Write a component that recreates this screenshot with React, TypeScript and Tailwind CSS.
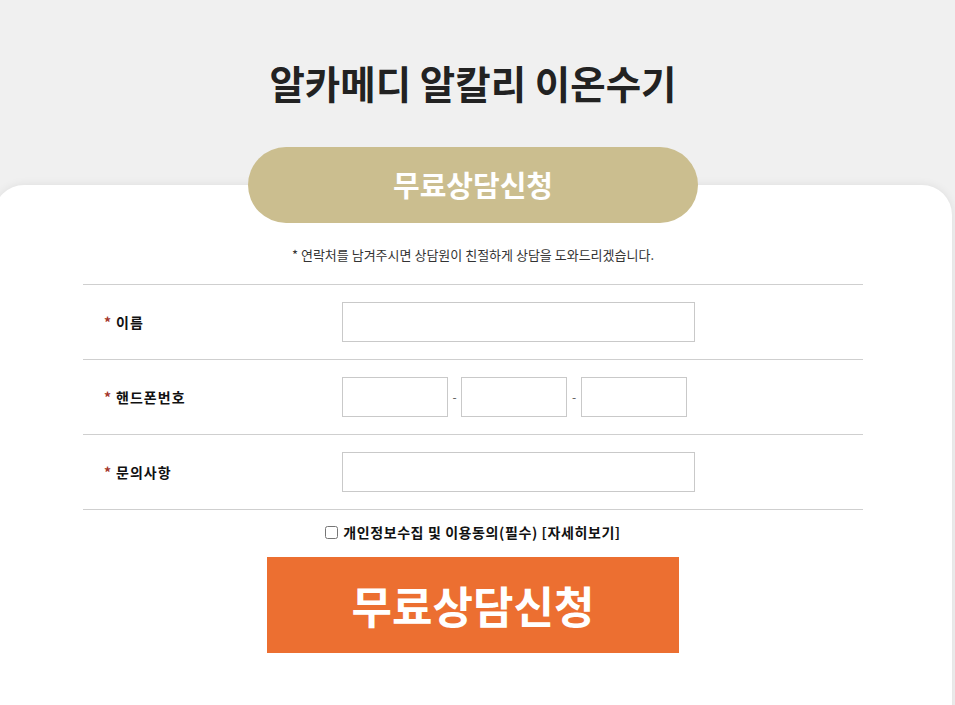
import React from "react";

const font = { fontFamily: '"Noto Sans CJK KR", "Noto Sans", sans-serif' };

function Row({ label, children }: { label: string; children: React.ReactNode }) {
  return (
    <div className="flex items-center h-[75px] border-b border-[#cfcfcf]">
      <div className="w-[259px] pl-[21px] flex items-center text-[14px] font-bold text-[#111] tracking-[1px]">
        <span className="text-[#a5362b] mr-[4px]">*</span>
        {label}
      </div>
      <div className="flex items-center">{children}</div>
    </div>
  );
}

export default function App() {
  return (
    <div className="w-[955px] h-[705px] overflow-hidden bg-[#f0f0f0] relative" style={font}>
      <h1 className="pt-[54px] text-center text-[38.5px] leading-[56px] font-bold text-[#222] w-[946px]">
        알카메디 알칼리 이온수기
      </h1>
      <div className="relative mt-[37px]">
        <div className="absolute left-[-6px] top-[38px] w-[958px] h-[560px] bg-white rounded-[30px] shadow-[0_0_10px_rgba(0,0,0,0.08)]" />
        <div className="relative flex flex-col items-center w-[946px]">
          <div className="w-[450px] h-[76px] rounded-full bg-[#cbbe8f] flex items-center justify-center text-white text-[29px] font-bold">
            무료상담신청
          </div>
          <p className="mt-[22px] text-[13px] text-[#333] leading-[20px]">
            * 연락처를 남겨주시면 상담원이 친절하게 상담을 도와드리겠습니다.
          </p>
          <div className="mt-[19px] w-[780px] border-t border-[#cfcfcf]">
            <Row label="이름">
              <input className="w-[353px] h-[40px] border border-[#c9c9c9] bg-white outline-none" />
            </Row>
            <Row label="핸드폰번호">
              <input className="w-[106px] h-[40px] border border-[#c9c9c9] bg-white outline-none" />
              <span className="w-[13px] text-center text-[12px] text-[#555]">-</span>
              <input className="w-[106px] h-[40px] border border-[#c9c9c9] bg-white outline-none" />
              <span className="w-[14px] text-center text-[12px] text-[#555]">-</span>
              <input className="w-[106px] h-[40px] border border-[#c9c9c9] bg-white outline-none" />
            </Row>
            <Row label="문의사항">
              <input className="w-[353px] h-[40px] border border-[#c9c9c9] bg-white outline-none" />
            </Row>
          </div>
          <label className="mt-[12px] flex items-center text-[14px] font-bold text-[#111] leading-[20px] tracking-[0.6px]">
            <input type="checkbox" className="w-[13px] h-[13px] mr-[5px]" />
            개인정보수집 및 이용동의(필수) [자세히보기]
          </label>
          <button className="mt-[15px] w-[412px] h-[96px] bg-[#ec6f31] text-white text-[44px] font-bold flex items-center justify-center">
            무료상담신청
          </button>
        </div>
      </div>
    </div>
  );
}
